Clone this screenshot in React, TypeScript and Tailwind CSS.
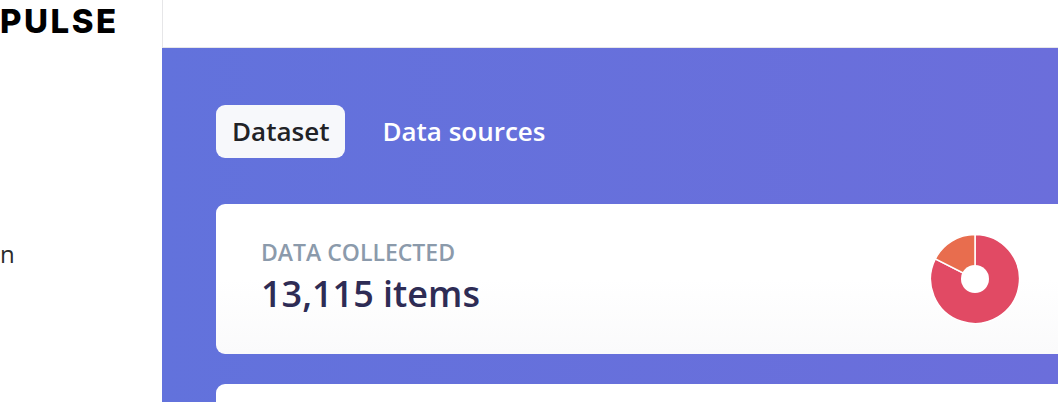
import React from "react";

// Donut chart: share of collected items by source
function Donut() {
  return (
    <svg width="92" height="92" viewBox="0 0 92 92">
      <path d="M46 46 L46 1.5 A44.5 44.5 0 1 1 6.35 25.8 Z" fill="#e14a64" stroke="#fff" strokeWidth="1.5" />
      <path d="M46 46 L6.35 25.8 A44.5 44.5 0 0 1 46 1.5 Z" fill="#e86d4e" stroke="#fff" strokeWidth="1.5" />
      <circle cx="46" cy="46" r="14" fill="#fff" />
    </svg>
  );
}

export default function App() {
  return (
    <div
      className="flex h-[402px] w-[1058px] overflow-hidden bg-white"
      style={{ fontFamily: '"Open Sans", "Noto Sans", sans-serif' }}
    >
      {/* Sidebar */}
      <aside className="flex w-[162px] shrink-0 flex-col bg-white">
        <div className="mt-[1px] text-[33px] font-extrabold leading-[40px] tracking-[2.5px] text-black" style={{ fontFamily: "Inter, sans-serif" }}>
          PULSE
        </div>
        <div className="mt-[198px] text-[24px] leading-[30px] text-[#2b2b2b]">n</div>
      </aside>

      {/* Main */}
      <main className="flex min-w-0 flex-1 flex-col">
        <header className="h-[48px] shrink-0 border-b border-l border-[#e6e6e8] bg-white" />
        <section className="flex-1 bg-gradient-to-r from-[#6272dc] to-[#6b6edb] pl-[54px] pt-[57px]">
          {/* Tabs */}
          <div className="flex items-center gap-[21px]">
            <button className="h-[53px] rounded-[9px] bg-[#f7f8fb] px-4 text-[26px] font-semibold text-[#212226]">
              Dataset
            </button>
            <button className="h-[53px] px-4 text-[26px] font-semibold text-white">Data sources</button>
          </div>

          {/* Data collected card */}
          <div className="mt-[46px] flex h-[150px] w-[880px] items-center justify-between rounded-[9px] bg-gradient-to-b from-white via-white to-[#fafafb] pl-[45px] pr-[75px]">
            <div className="pb-[4px]">
              <p className="text-[23px] font-semibold uppercase leading-[28px] text-[#8b9aab]">Data collected</p>
              <p className="mt-[6px] text-[36px] font-semibold leading-[44px] text-[#2e2c55]">13,115 items</p>
            </div>
            <Donut />
          </div>

          <div className="mt-[30px] h-[60px] w-[880px] rounded-[9px] bg-white" />
        </section>
      </main>
    </div>
  );
}
